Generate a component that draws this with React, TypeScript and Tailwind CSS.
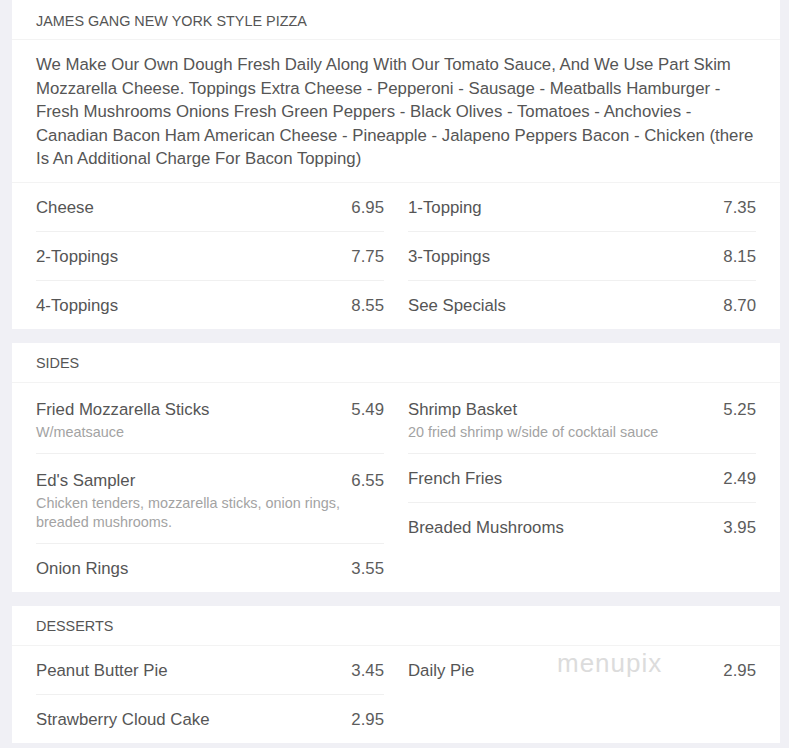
const sections = [
  {
    title: "JAMES GANG NEW YORK STYLE PIZZA",
    desc: "We Make Our Own Dough Fresh Daily Along With Our Tomato Sauce, And We Use Part Skim Mozzarella Cheese. Toppings Extra Cheese - Pepperoni - Sausage - Meatballs Hamburger - Fresh Mushrooms Onions Fresh Green Peppers - Black Olives - Tomatoes - Anchovies - Canadian Bacon Ham American Cheese - Pineapple - Jalapeno Peppers Bacon - Chicken (there Is An Additional Charge For Bacon Topping)",
    left: [
      { name: "Cheese", price: "6.95" },
      { name: "2-Toppings", price: "7.75" },
      { name: "4-Toppings", price: "8.55" },
    ],
    right: [
      { name: "1-Topping", price: "7.35" },
      { name: "3-Toppings", price: "8.15" },
      { name: "See Specials", price: "8.70" },
    ],
  },
  {
    title: "SIDES",
    left: [
      { name: "Fried Mozzarella Sticks", price: "5.49", sub: "W/meatsauce" },
      {
        name: "Ed's Sampler",
        price: "6.55",
        sub: "Chicken tenders, mozzarella sticks, onion rings, breaded mushrooms.",
      },
      { name: "Onion Rings", price: "3.55" },
    ],
    right: [
      { name: "Shrimp Basket", price: "5.25", sub: "20 fried shrimp w/side of cocktail sauce" },
      { name: "French Fries", price: "2.49" },
      { name: "Breaded Mushrooms", price: "3.95" },
    ],
  },
  {
    title: "DESSERTS",
    left: [
      { name: "Peanut Butter Pie", price: "3.45" },
      { name: "Strawberry Cloud Cake", price: "2.95" },
    ],
    right: [{ name: "Daily Pie", price: "2.95" }],
    watermark: true,
  },
];

type Item = { name: string; price: string; sub?: string };

function Column({ items }: { items: Item[] }) {
  return (
    <div className="flex flex-col">
      {items.map((it, i) => (
        <div
          key={it.name}
          className={`${it.sub ? "pt-[15px] pb-[11px]" : "pt-[13px] pb-[11px]"} ${
            i < items.length - 1 ? "border-b border-[#f0f0f0]" : ""
          }`}
        >
          <div className="flex items-start justify-between text-[16.8px] leading-6 text-[#555]">
            <span>{it.name}</span>
            <span className="text-[#5c5c5c]">{it.price}</span>
          </div>
          {it.sub && (
            <p className="mt-[1px] pr-10 text-[14.4px] leading-[19px] text-[#a3a3a3]">{it.sub}</p>
          )}
        </div>
      ))}
    </div>
  );
}

export default function App() {
  return (
    <div
      className="flex min-h-[748px] flex-col gap-[14px] bg-[#f0f0f5] pl-3 pr-[9px]"
      style={{ fontFamily: '"Liberation Sans", Arial, sans-serif' }}
    >
      {sections.map((s) => (
        <section key={s.title} className="relative bg-white">
          <div className="flex h-10 items-center border-b border-[#f3f3f3] px-6 pt-1 text-[14.4px] text-[#555]">
            {s.title}
          </div>
          {s.desc && (
            <p className="border-b border-[#f3f3f3] px-6 pt-[13px] pb-[11px] text-[16.8px] leading-[23.5px] text-[#555]">
              {s.desc}
            </p>
          )}
          <div className="grid grid-cols-2 gap-6 px-6">
            <Column items={s.left} />
            <Column items={s.right} />
          </div>
          {s.watermark && (
            <div className="pointer-events-none absolute left-[545px] top-[38px] text-[26px] font-light tracking-[1px] text-[#dcdcdc]">
              menupix
            </div>
          )}
        </section>
      ))}
    </div>
  );
}
